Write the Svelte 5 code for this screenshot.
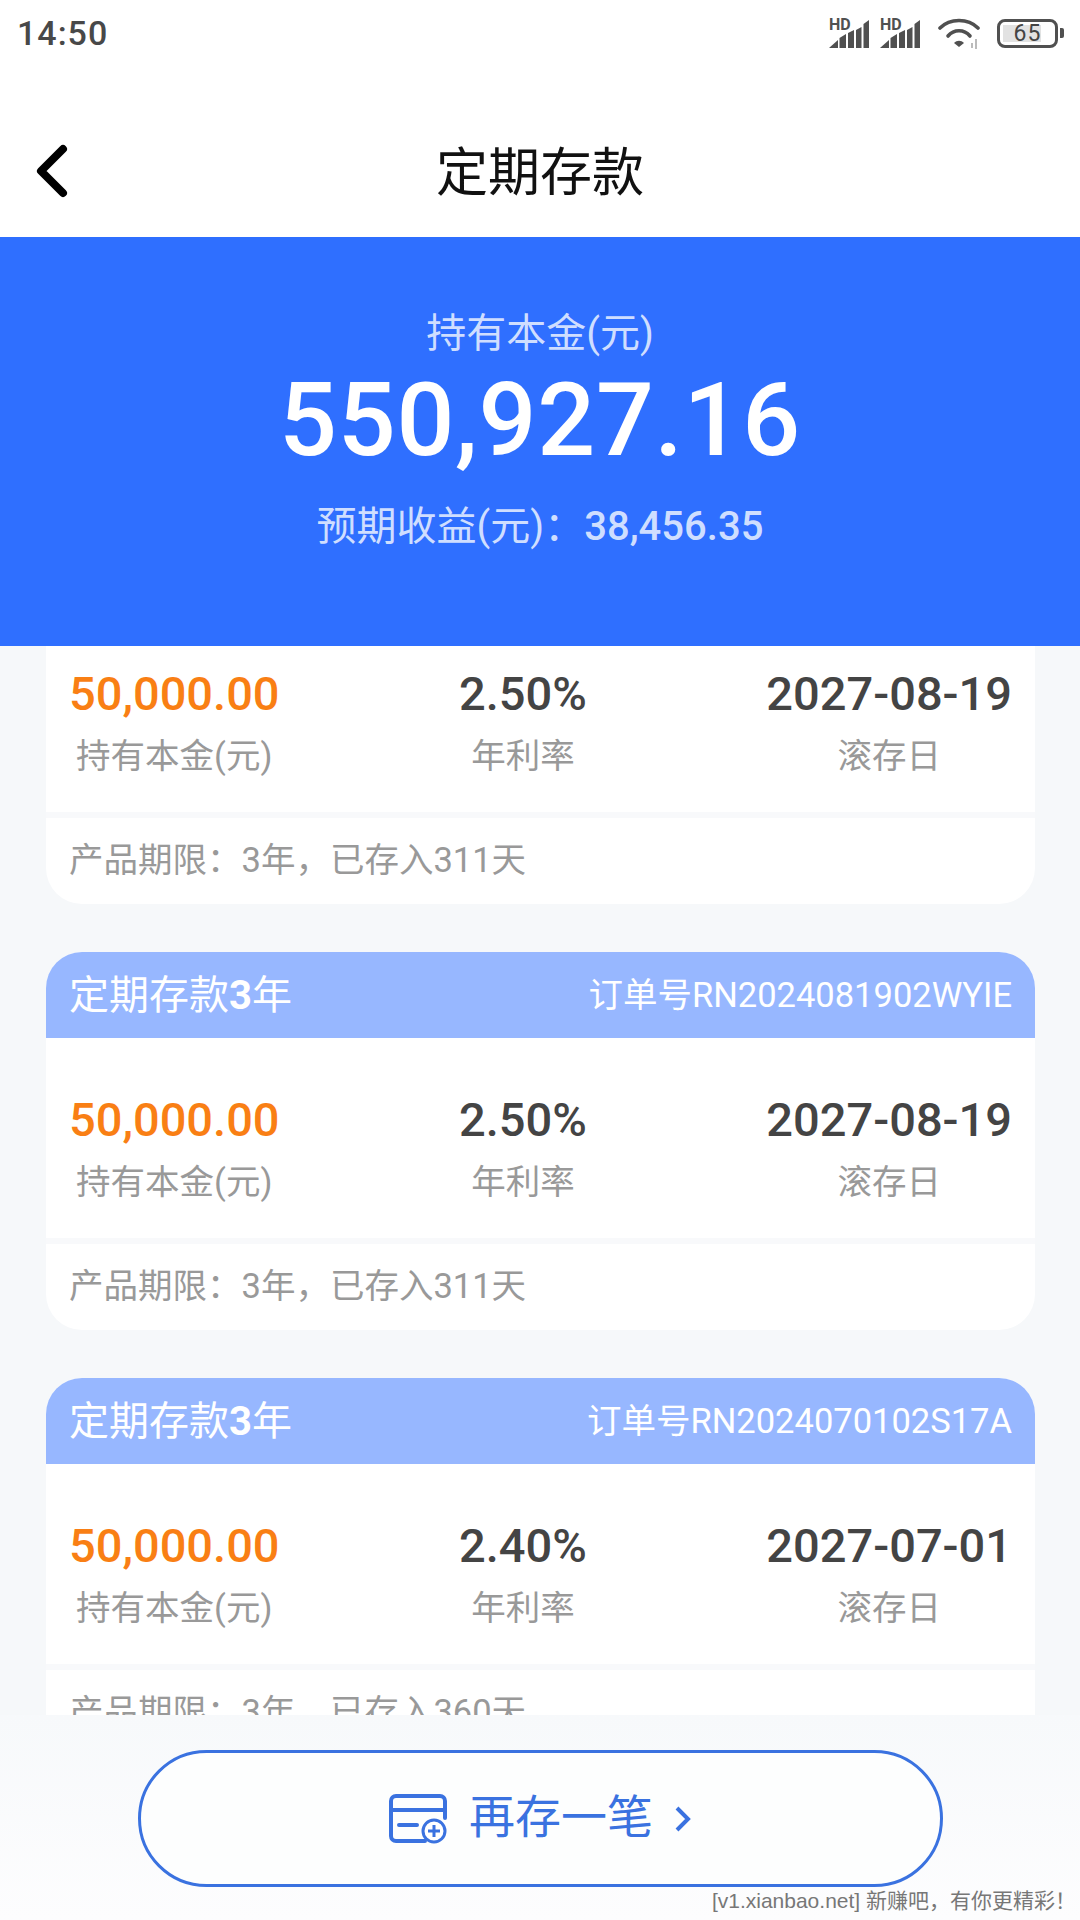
<script>
    import { onMount } from 'svelte';

    let list;

    const orders = [
        { no: 'RN2024081902WYIE', rate: '2.50%', date: '2027-08-19', days: 311 },
        { no: 'RN2024081902WYIE', rate: '2.50%', date: '2027-08-19', days: 311 },
        { no: 'RN2024070102S17A', rate: '2.40%', date: '2027-07-01', days: 360 }
    ];

    onMount(() => {
        list.scrollTop = 120;
    });
</script>

<div class="page">
    <div class="status">
        <span class="time">14:50</span>
        <div class="status-icons">
            <div class="signals">
                {#each [0, 1] as s}
                    <svg width="40" height="38" viewBox="0 -4 40 38">
                        <text x="0" y="12" class="hd">HD</text>
                        <path d="M0 30 9 22v8zM10.5 20l6.5-4v14h-6.5zM19 15l6-3v18h-6zM27 12l5.5-3v21H27zM34.5 6l5.5-4v28h-5.5z" fill="#505050" />
                    </svg>
                {/each}
            </div>
            <svg width="44" height="32" viewBox="0 0 44 32">
                <path d="M2 11C12 1 30 1 40 11" fill="none" stroke="#505050" stroke-width="3.6" stroke-linecap="round" />
                <path d="M10 19C16 12 26 12 32 19" fill="none" stroke="#505050" stroke-width="3.6" stroke-linecap="round" />
                <path d="M16 26c3-3 7-3 10 0l-5 4z" fill="#505050" />
                <path d="M38 22v10M34 26v5" stroke="#bbb" stroke-width="2" />
            </svg>
            <div class="battery">
                <div class="level"></div>
                <span>65</span>
            </div>
            <div class="nub"></div>
        </div>
    </div>

    <div class="nav">
        <svg class="back" width="36" height="58" viewBox="0 0 36 58">
            <path d="M29 7 7 29l22 22" fill="none" stroke="#000" stroke-width="8" stroke-linecap="round" stroke-linejoin="round" />
        </svg>
        <h1>定期存款</h1>
    </div>

    <div class="hero">
        <div class="hero-label">持有本金(元)</div>
        <div class="hero-amount">550,927.16</div>
        <div class="hero-income">预期收益(元)：<b>38,456.35</b></div>
    </div>

    <div class="list" bind:this={list}>
        {#each orders as o}
            <div class="card">
                <div class="card-head">
                    <span class="product">定期存款<b>3</b>年</span>
                    <span class="order">订单号{o.no}</span>
                </div>
                <div class="card-body">
                    <div class="col">
                        <div class="num orange">50,000.00</div>
                        <div class="cap">持有本金(元)</div>
                    </div>
                    <div class="col">
                        <div class="num">{o.rate}</div>
                        <div class="cap">年利率</div>
                    </div>
                    <div class="col">
                        <div class="num">{o.date}</div>
                        <div class="cap">滚存日</div>
                    </div>
                </div>
                <div class="card-foot">产品期限：3年，已存入{o.days}天</div>
            </div>
        {/each}
    </div>

    <div class="bottom">
        <div class="again">
            <svg width="59" height="50" viewBox="0 0 59 50">
                <path d="M36 47H7a5 5 0 0 1-5-5V7a5 5 0 0 1 5-5h44a5 5 0 0 1 5 5v17" fill="none" stroke="#3a72e0" stroke-width="4" stroke-linecap="round" />
                <path d="M2 16h54M10 31h18" stroke="#3a72e0" stroke-width="4" stroke-linecap="round" />
                <circle cx="45" cy="37" r="11" fill="#fff" stroke="#3a72e0" stroke-width="3" />
                <path d="M39 37h12M45 31v12" stroke="#3a72e0" stroke-width="3" />
            </svg>
            <span class="again-text">再存一笔</span>
            <svg width="17" height="28" viewBox="0 0 17 28">
                <path d="M3 3l11 11L3 25" fill="none" stroke="#3a72e0" stroke-width="4" />
            </svg>
        </div>
        <div class="watermark">[v1.xianbao.net] 新赚吧，有你更精彩！</div>
    </div>
</div>

<style>
    :global(body) {
        margin: 0;
        font-family: Roboto, "Noto Sans CJK SC", sans-serif;
    }

    .page {
        width: 1080px;
        height: 1920px;
        display: flex;
        flex-direction: column;
        background: #f6f8fa;
        overflow: hidden;
    }

    .status {
        height: 66px;
        background: #fff;
        display: flex;
        align-items: center;
        justify-content: space-between;
        padding: 0 16px 0 17px;
    }

    .time {
        font-size: 34px;
        font-weight: 500;
        color: #484848;
        letter-spacing: 1px;
    }

    .status-icons {
        display: flex;
        align-items: center;
        gap: 14px;
    }

    .signals {
        display: flex;
        gap: 11px;
        margin-right: 4px;
    }

    .hd {
        font: 700 16px Roboto, sans-serif;
        fill: #505050;
    }

    .battery {
        box-sizing: border-box;
        width: 61px;
        height: 29px;
        margin-left: 1px;
        border: 3.5px solid #505050;
        border-radius: 8px;
        position: relative;
        display: flex;
        align-items: center;
        justify-content: center;
    }

    .battery span {
        font-size: 23px;
        color: #444;
        position: relative;
        letter-spacing: 1px;
    }

    .level {
        position: absolute;
        left: 3px;
        top: 3px;
        bottom: 3px;
        width: 38px;
        background: #e2e2e2;
    }

    .nub {
        width: 4px;
        height: 10px;
        background: #505050;
        margin-left: -12px;
        border-radius: 0 2px 2px 0;
    }

    .nav {
        box-sizing: border-box;
        height: 171px;
        padding-top: 34px;
        background: #fff;
        position: relative;
        display: flex;
        align-items: center;
        justify-content: center;
    }

    .back {
        position: absolute;
        left: 34px;
        top: 76px;
    }

    .nav h1 {
        margin: 0;
        font-size: 52px;
        font-weight: 400;
        color: #111;
    }

    .hero {
        height: 409px;
        background: #2f6fff;
        color: #fff;
        display: flex;
        flex-direction: column;
        align-items: center;
    }

    .hero-label {
        margin-top: 71px;
        font-size: 40px;
        line-height: 52px;
        color: #cfdeff;
    }

    .hero-amount {
        font-size: 102px;
        font-weight: 550;
        line-height: 116px;
        margin-top: 2px;
        letter-spacing: 0.7px;
    }

    .hero-income {
        margin-top: 23px;
        font-size: 40px;
        line-height: 52px;
        color: #cfdeff;
    }

    .hero-income b {
        font-weight: 550;
    }

    .list {
        flex: 1;
        min-height: 0;
        overflow-y: hidden;
        padding: 0 45px 0 46px;
    }

    .card {
        height: 378px;
        margin-bottom: 48px;
        border-radius: 36px;
        overflow: hidden;
        display: flex;
        flex-direction: column;
        background: #fff;
    }

    .card-head {
        box-sizing: border-box;
        height: 86px;
        flex: none;
        padding: 0 23px 6px 23px;
        background: #97b7ff;
        color: #fff;
        display: flex;
        align-items: center;
        justify-content: space-between;
    }

    .product {
        font-size: 40px;
    }

    .product b {
        font-weight: 700;
    }

    .order {
        font-size: 34.5px;
    }

    .card-body {
        box-sizing: border-box;
        height: 206px;
        flex: none;
        display: flex;
        justify-content: space-between;
        padding: 0 23px;
        border-bottom: 6px solid #f8f9fb;
    }

    .col {
        display: flex;
        flex-direction: column;
        align-items: center;
        padding-top: 53px;
    }

    .num {
        font-size: 47px;
        font-weight: 550;
        line-height: 58px;
        color: #444;
    }

    .orange {
        color: #f97f14;
    }

    .cap {
        margin-top: 10px;
        font-size: 34.5px;
        line-height: 46px;
        color: #999;
    }

    .card-foot {
        padding: 19px 23px 0;
        font-size: 34.5px;
        line-height: 46px;
        color: #999;
    }

    .bottom {
        height: 205px;
        flex: none;
        background: linear-gradient(#f7f9fb, #fdfdfe);
        position: relative;
        display: flex;
        justify-content: center;
    }

    .again {
        box-sizing: border-box;
        margin-top: 35px;
        width: 805px;
        height: 137px;
        border: 3px solid #3a72e0;
        border-radius: 70px;
        background: #fdfefe;
        display: flex;
        align-items: center;
        justify-content: center;
        gap: 21px;
        color: #3a72e0;
    }

    .again-text {
        font-size: 46px;
        line-height: 56px;
        margin-bottom: 4px;
    }

    .watermark {
        position: absolute;
        right: 4px;
        bottom: 6px;
        font-size: 21px;
        color: #777;
        font-family: "Liberation Sans", "Noto Sans CJK SC", sans-serif;
    }
</style>
